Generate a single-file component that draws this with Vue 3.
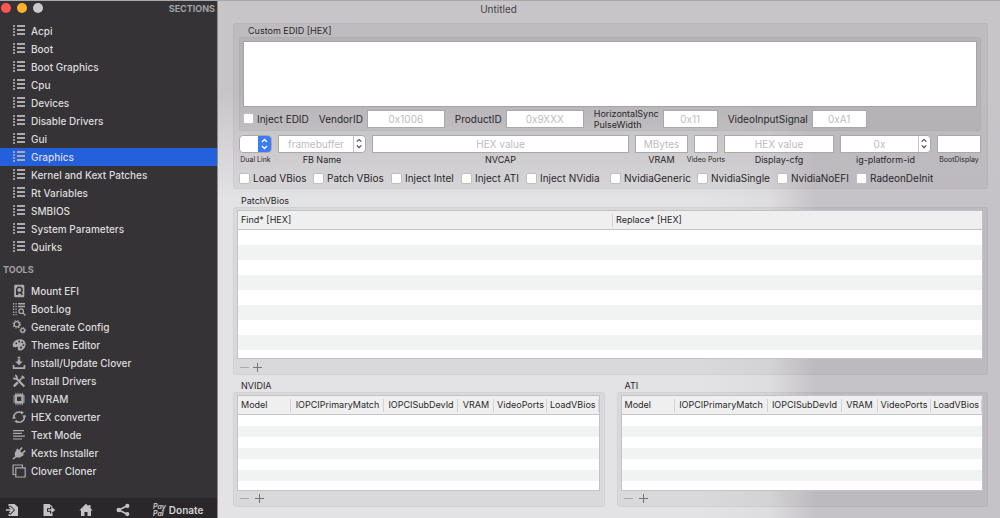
<script setup>
import { ref } from 'vue'

const sections = ['Acpi', 'Boot', 'Boot Graphics', 'Cpu', 'Devices', 'Disable Drivers', 'Gui', 'Graphics', 'Kernel and Kext Patches', 'Rt Variables', 'SMBIOS', 'System Parameters', 'Quirks']
const active = ref('Graphics')

const tools = [
  { name: 'Mount EFI', icon: 'disk' },
  { name: 'Boot.log', icon: 'log' },
  { name: 'Generate Config', icon: 'gears' },
  { name: 'Themes Editor', icon: 'palette' },
  { name: 'Install/Update Clover', icon: 'download' },
  { name: 'Install Drivers', icon: 'wrench' },
  { name: 'NVRAM', icon: 'chip' },
  { name: 'HEX converter', icon: 'sync' },
  { name: 'Text Mode', icon: 'lines' },
  { name: 'Kexts Installer', icon: 'plug' },
  { name: 'Clover Cloner', icon: 'copy' },
]

const flags = ['Load VBios', 'Patch VBios', 'Inject Intel', 'Inject ATI', 'Inject NVidia', 'NvidiaGeneric', 'NvidiaSingle', 'NvidiaNoEFI', 'RadeonDeInit']
const cards = ['NVIDIA', 'ATI']
const cardColumns = ['Model', 'IOPCIPrimaryMatch', 'IOPCISubDevId', 'VRAM', 'VideoPorts', 'LoadVBios']
</script>

<template>
  <div class="window">
    <aside class="sidebar">
      <header class="bar">
        <div class="lights">
          <button class="light red" aria-label="Close"></button>
          <button class="light amber" aria-label="Minimize"></button>
          <button class="light grey" aria-label="Zoom"></button>
        </div>
        <h2 class="heading">SECTIONS</h2>
      </header>
      <nav aria-label="Sections">
        <button v-for="s in sections" :key="s" class="item" :class="{ active: s === active }" @click="active = s">
          <svg class="icon" viewBox="0 0 14 14" fill="currentColor">
            <path opacity=".85" d="M1 1h2v2H1zM1 4h2v2H1zM1 7h2v2H1zM1 10h2v2H1z" />
            <path d="M5 1h8v2H5zM5 5h8v2H5zM5 9h8v2H5z" />
          </svg>
          <span>{{ s }}</span>
        </button>
      </nav>
      <h2 class="heading tools">TOOLS</h2>
      <nav aria-label="Tools">
        <button v-for="t in tools" :key="t.name" class="item">
          <svg class="icon" viewBox="0 0 14 14" fill="currentColor">
            <template v-if="t.icon === 'disk'">
              <path fill-rule="evenodd" d="M3.200.8h8.100a1 1 0 0 1 1 1v10.400a1 1 0 0 1-1 1H3.200a1 1 0 0 1-1-1V1.800a1 1 0 0 1 1-1zM7.300 2.500a3.500 3.500 0 0 0-3.300 4.600V11h2l.8-2 3.400 2.200.8-1.300-1.300-1.200A3.500 3.500 0 0 0 7.300 2.500z" />
              <circle cx="7.300" cy="5.900" r="2" />
            </template>
            <template v-else-if="t.icon === 'log'">
              <path d="M1 1h1.300v1.500H1zM1 3.800h1.300v1.500H1zM1 6.600h1.300v1.500H1zM1 9.400h1.300v1.500H1zM1 12h1.300v1.200H1zM3.500 1h1.200v1.500H3.500zM3.500 3.800h1.200v1.500H3.500zM3.500 6.600h1.200v1.500H3.500zM3.500 9.400h1.200v1.500H3.500zM3.500 12h1.200v1.200H3.500zM6 1h7v1.500H6zM6 3.800h7v1.500H6z" />
              <path d="M11 11l2.500 2.500" fill="none" stroke="currentColor" stroke-width="1.300" />
              <circle cx="9.200" cy="9.200" r="2.300" fill="none" stroke="currentColor" stroke-width="1.200" />
            </template>
            <g v-else-if="t.icon === 'gears'" fill="none" stroke="currentColor">
              <circle cx="4.800" cy="4.300" r="2.600" stroke-width="1.300" />
              <circle cx="4.800" cy="4.300" r="3.700" stroke-width="1.200" stroke-dasharray="1.300 1.600" />
              <circle cx="10.700" cy="10.300" r="1.900" stroke-width="1.300" />
              <circle cx="10.700" cy="10.300" r="2.800" stroke-width="1" stroke-dasharray="1 1.200" />
            </g>
            <path v-else-if="t.icon === 'palette'" fill-rule="evenodd" d="M8 1.300c3.300 0 5.600 2 5.600 4.900 0 3.500-2.700 6.400-6.200 6.400-1.600 0-1.700-1-1.500-2 .3-1.400-.2-2.300-1.700-1.700C2.500 9.500.7 9.400.7 7.300.7 4.200 4 1.300 8 1.300zM4.300 4.400a.9.900 0 1 0 0 1.800.9.900 0 0 0 0-1.800zM7.200 2.600a.9.900 0 1 0 0 1.800.9.900 0 0 0 0-1.800zM10.300 3.400a.9.900 0 1 0 0 1.800.9.900 0 0 0 0-1.800zM11.400 6.300a.9.900 0 1 0 0 1.800.9.900 0 0 0 0-1.800zM9 8.500a1.100 1.100 0 1 0 0 2.200 1.100 1.100 0 0 0 0-2.200z" />
            <path v-else-if="t.icon === 'download'" d="M5.700.8h2.600v1.700H5.700zM5.700 3.300h2.600V5.500h2.500L7 9.300 3.200 5.500h2.500zM.7 9h1.700v2.300h9.200V9h1.700v4H.7z" />
            <g v-else-if="t.icon === 'wrench'" fill="none" stroke="currentColor">
              <path d="M4.500 4.500l7.800 8" stroke-width="2.200" />
              <path d="M1.500 3.800c1 1.600 3 1.400 3.300.2.300-1-.5-2.300-1.700-2.600" stroke-width="1.800" />
              <path d="M1.800 12.300l4-4" stroke-width="2.500" />
              <path d="M6.500 7.500l5-5M9.800 1.800l2.600 2.600" stroke-width="1.700" />
            </g>
            <template v-else-if="t.icon === 'chip'">
              <path fill-rule="evenodd" d="M2.800 2.300h8.700v9.200H2.800zM5 4.700v4.400h4.300V4.700z" />
              <path d="M4 .9v2M6.100.9v2M8.200.9v2M10.300.9v2M4 11.100v2M6.100 11.100v2M8.200 11.100v2M10.300 11.100v2M1.200 4h2M1.200 6h2M1.200 8h2M1.200 10h2M11 4h2M11 6h2M11 8h2M11 10h2" fill="none" stroke="currentColor" stroke-width=".9" />
            </template>
            <g v-else-if="t.icon === 'sync'">
              <path d="M2 8.500A5.200 5.200 0 0 1 9.500 2.600M12.200 5.500A5.200 5.200 0 0 1 4.500 11.400" fill="none" stroke="currentColor" stroke-width="1.500" />
              <path d="M0 8.500h4L2 5.700zM10.200 5.600h4l-2 2.900zM9 .8l3 2-3 1.600zM5.200 9.800v3.400L2.300 11.300z" />
            </g>
            <path v-else-if="t.icon === 'lines'" d="M1 2h11v1.200H1zM1 4.800h9v1.200H1zM1 7.600h12v1.200H1zM1 10.400h9v1.200H1z" />
            <template v-else-if="t.icon === 'plug'">
              <path d="M5.300 3.200l5.700 5.800c-1.500 2.400-4.700 3.300-7.200 1.900C1.700 8.500 3 5.100 5.300 3.200z" />
              <path d="M1 13.200l3-2.700M7.300 5L10 1.500M10 7.600l3.200-3M4.800 3l6.500 6.400" fill="none" stroke="currentColor" stroke-width="1.600" />
            </template>
            <g v-else fill="none" stroke="currentColor" stroke-width="1.200">
              <path d="M3.500 10.500H1.100V1h9.300v2.500" />
              <path d="M3.800 3.800h9.400v9.200H3.800z" />
            </g>
          </svg>
          <span>{{ t.name }}</span>
        </button>
      </nav>
      <footer class="dock">
        <button aria-label="Import"><svg viewBox="0 0 14 14"><path fill="currentColor" d="M3.500 1h6L13 4v9H3.500v-2l2 .8L10 7 5.500 2.500l-2 1z" /><path d="M.8 7h6M4.500 3.800L7.700 7l-3.200 3.200" fill="none" stroke="currentColor" stroke-width="1.700" /></svg></button>
        <button aria-label="Export"><svg viewBox="0 0 14 14"><path fill="currentColor" d="M1.500 1h6l3 2.500v1L8 3.300v2H5v3.400h3v2l2.500-1V13h-9z" /><path fill="currentColor" d="M6 6.200h3.200V3.700L13.300 7 9.200 10.300V7.800H6z" /></svg></button>
        <button aria-label="Home"><svg viewBox="0 0 14 14"><path fill="currentColor" d="M7 .8l2.500 2.400V2h2v3.200l2.200 2.200H12V13H8.500V9h-3v4H2V7.400H.3z" /></svg></button>
        <button aria-label="Share"><svg viewBox="0 0 14 14"><path d="M11.300 2.800L2.800 7l8.500 4.200" fill="none" stroke="currentColor" stroke-width="1.600" /><g fill="currentColor"><circle cx="11.300" cy="2.900" r="2.100" /><circle cx="2.800" cy="7" r="2.300" /><circle cx="11.300" cy="11.100" r="2.100" /></g></svg></button>
        <button class="donate"><span class="paypal"><i>Pay</i><i>Pal</i></span>Donate</button>
      </footer>
    </aside>

    <main class="content">
      <h1 class="title">Untitled</h1>

      <section class="panel graphics">
        <label class="caption edid" for="edid">Custom EDID [HEX]</label>
        <div class="inner">
          <textarea id="edid"></textarea>
          <div class="edid-row">
            <label class="check"><input type="checkbox" />Inject EDID</label>
            <label class="pair">VendorID<input class="w78" type="text" placeholder="0x1006" /></label>
            <label class="pair">ProductID<input class="w78" type="text" placeholder="0x9XXX" /></label>
            <label class="pair"><span class="two">HorizontalSync<br />PulseWidth</span><input class="w55" type="text" placeholder="0x11" /></label>
            <label class="pair">VideoInputSignal<input class="w55" type="text" placeholder="0xA1" /></label>
          </div>
        </div>
        <div class="fields">
          <label class="field tiny">
            <span class="popup"><select></select><svg viewBox="0 0 12 16"><path d="M3.500 6L6 3.500 8.500 6M3.500 10L6 12.500 8.500 10" fill="none" stroke="currentColor" stroke-width="1.400" /></svg></span>
            <span>Dual Link</span>
          </label>
          <label class="field">
            <span class="combo"><input type="text" placeholder="framebuffer" /><svg viewBox="0 0 12 16"><path d="M3 5.500L5.500 3 8 5.500M3 9.500L5.500 12 8 9.500" fill="none" stroke="currentColor" stroke-width="1.200" /></svg></span>
            <span>FB Name</span>
          </label>
          <label class="field"><input type="text" placeholder="HEX value" /><span>NVCAP</span></label>
          <label class="field"><input type="text" placeholder="MBytes" /><span>VRAM</span></label>
          <label class="field tiny"><input type="text" /><span>Video Ports</span></label>
          <label class="field"><input type="text" placeholder="HEX value" /><span>Display-cfg</span></label>
          <label class="field">
            <span class="combo"><input type="text" placeholder="0x" /><svg viewBox="0 0 12 16"><path d="M3 5.500L5.500 3 8 5.500M3 9.500L5.500 12 8 9.500" fill="none" stroke="currentColor" stroke-width="1.200" /></svg></span>
            <span>ig-platform-id</span>
          </label>
          <label class="field tiny"><input type="text" /><span>BootDisplay</span></label>
        </div>
        <div class="flags">
          <label v-for="f in flags" :key="f" class="check"><input type="checkbox" />{{ f }}</label>
        </div>
      </section>

      <section class="group grow">
        <h3 class="caption">PatchVBios</h3>
        <div class="panel box">
          <div class="list tall">
            <table>
              <thead><tr><th>Find* [HEX]</th><th>Replace* [HEX]</th></tr></thead>
            </table>
          </div>
          <div class="actions">
            <button aria-label="Remove" disabled><svg viewBox="0 0 10 10"><path d="M0 4.500h9" stroke="currentColor" /></svg></button>
            <button aria-label="Add"><svg viewBox="0 0 10 10"><path d="M0 4.500h9M4.500 0v9" stroke="currentColor" /></svg></button>
          </div>
        </div>
      </section>

      <div class="cards">
        <section v-for="c in cards" :key="c" class="group">
          <h3 class="caption">{{ c }}</h3>
          <div class="panel box">
            <div class="list short">
              <table>
                <colgroup><col class="c1" /><col class="c2" /><col class="c3" /><col class="c4" /><col class="c5" /><col class="c6" /></colgroup>
                <thead><tr><th v-for="h in cardColumns" :key="h">{{ h }}</th></tr></thead>
              </table>
            </div>
            <div class="actions wide">
              <button aria-label="Remove" disabled><svg viewBox="0 0 10 10"><path d="M0 4.500h9" stroke="currentColor" /></svg></button>
              <button aria-label="Add"><svg viewBox="0 0 10 10"><path d="M0 4.500h9M4.500 0v9" stroke="currentColor" /></svg></button>
            </div>
          </div>
        </section>
      </div>
    </main>
  </div>
</template>

<style>
body { margin: 0; }
</style>

<style scoped>
* { box-sizing: border-box; }
.window {
  display: flex;
  min-height: 100vh;
  font-family: Inter, "Liberation Sans", sans-serif;
  font-size: 10px;
  line-height: 14px;
  color: #29272a;
  border-top: 1px solid #a9a8aa;
}
button, input, select, textarea { font: inherit; color: inherit; margin: 0; padding: 0; border: 0; border-radius: 0; background: none; }
h1, h2, h3 { margin: 0; font-weight: 400; }

.sidebar { display: flex; flex-direction: column; flex: 0 0 218px; background: #353336; color: #dddcdd; border-right: 1px solid #8d8b8e; }
.bar { display: flex; justify-content: space-between; height: 21px; padding: 1px 2px 0 1px; }
.lights { display: flex; gap: 6px; padding-top: 1px; }
.light { width: 10px; height: 10px; border-radius: 50%; }
.red { background: #fc5753; }
.amber { background: #fdb32b; }
.grey { background: #cbc9cb; }
.heading { font-size: 9px; font-weight: 700; color: #a3a1a4; }
.tools { padding: 7px 3px 5px; }
.item { display: flex; align-items: center; gap: 5px; width: 100%; height: 18px; padding: 0 12px; text-align: left; font-weight: 500; white-space: nowrap; }
.item.active { background: #2560dc; }
.icon { width: 14px; height: 14px; flex: none; color: #adabae; }
.dock { display: flex; align-items: center; height: 21px; margin-top: auto; padding: 3px 12px 0 5px; background: #29272a; border-top: 1px solid #323033; }
.dock button { width: 37px; height: 14px; color: #c5c3c5; }
.dock svg { display: block; width: 14px; height: 14px; }
.dock .donate { display: flex; flex: 1; align-items: center; gap: 3px; font-weight: 600; color: #d5d3d5; }
.paypal { display: flex; flex-direction: column; font-size: 7px; line-height: 7px; text-align: left; }

.content {
  display: flex; flex-direction: column; flex: 1; min-width: 0; padding: 0 12px 11px 15px;
  background:
    linear-gradient(to bottom, #c8c5c9 90px, #c8c5c900 200px),
    linear-gradient(to right, #c6c3c800 calc(100% - 300px), #c6c3c830 calc(100% - 230px), #c6c3c8 calc(100% - 185px)),
    #e3e2e4;
}
.title { height: 22px; padding: 1px 224px 0 0; text-align: center; font-size: 10px; color: #454346; }
.panel { border: 1px solid #00000009; border-radius: 3px; background: #0000000b; }
.caption { display: block; padding-left: 8px; font-size: 9px; line-height: 12px; }
.graphics { padding: 1px 6px 3px 5px; }
.graphics .caption { padding-left: 9px; }
.inner { padding: 3px; border: 1px solid #00000009; border-radius: 3px; background: #0000000b; }
textarea { display: block; width: 100%; height: 66px; background: #fff; border: 1px solid #a5a3a6; resize: none; }
.edid-row { display: flex; align-items: center; gap: 10px; height: 20px; padding-top: 3px; }
.pair { display: flex; align-items: center; gap: 4px; white-space: nowrap; }
.two { font-size: 9px; line-height: 11px; }
input[type="text"] { width: 100%; height: 18px; background: #fff; border: 1px solid #aaa8ab; text-align: center; }
input::placeholder { color: #bdbcbe; opacity: 1; }
input.w78 { width: 78px; }
input.w55 { width: 55px; }
.check { display: flex; align-items: center; gap: 3px; white-space: nowrap; }
input[type="checkbox"] { appearance: none; width: 11px; height: 11px; flex: none; background: #fff; border: 1px solid #c0bec1; border-radius: 2px; }
.fields { display: grid; grid-template-columns: 33px 88px minmax(0, 1fr) 53px 24px 110px 91px 44px; gap: 6px; margin-top: 4px; }
.field { display: flex; flex-direction: column; align-items: center; font-size: 9px; line-height: 14px; white-space: nowrap; }
.field input { font-size: 10px; }
.field.tiny { font-size: 7px; }
.popup, .combo { display: flex; width: 100%; height: 18px; border-radius: 4px; overflow: hidden; background: #fff; border: 1px solid #aaa8ab; }
.popup select { flex: 1; min-width: 0; appearance: none; }
.popup svg { width: 13px; height: 16px; background: #3b7cf6; color: #fff; }
.combo { border-radius: 0 4px 4px 0; }
.combo input { flex: 1; min-width: 0; height: 16px; border: 0; border-right: 1px solid #c5c3c6; }
.combo svg { width: 11px; height: 16px; color: #444; }
.flags { display: grid; grid-template-columns: 74px 78px 70px 65px 84px 87px 80px 79px auto; margin-top: 4px; height: 14px; }

.group { display: flex; flex-direction: column; min-width: 0; padding-top: 5px; }
.grow { flex: 1; padding-top: 6px; }
.box { display: flex; flex: 1; flex-direction: column; padding: 2px 4px 0 3px; }
.list { flex: 1; border: 1px solid #c2c1c3; overflow: hidden; }
.tall { min-height: 148px; background: repeating-linear-gradient(#fff 0 15px, #f1f3f3 15px 30px) 0 19px; }
.short { min-height: 96px; background: repeating-linear-gradient(#fff 0 11px, #f1f3f3 11px 22px) 0 19px; }
table { width: 100%; border-collapse: separate; border-spacing: 0; table-layout: fixed; }
th { height: 19px; padding: 0 0 0 3px; border-bottom: 1px solid #c5c4c6; background: linear-gradient(#d3d2d4, #d3d2d4) right center / 1px 13px no-repeat #efefef; font-size: 9px; font-weight: 400; text-align: left; white-space: nowrap; }
.tall th:first-child { width: 50.4%; }
.tall th:last-child { background: #efefef; }
.short th:not(:first-child) { text-align: center; padding: 0; }
.c1 { width: 53px; }
.c2 { width: 93px; }
.c3 { width: 74px; }
.c4 { width: 36px; }
.c5 { width: 53px; }
.actions { display: flex; gap: 3px; align-items: center; height: 15px; padding: 2px 0 0 3px; }
.actions.wide { gap: 5px; padding-top: 0; }
.actions button { width: 10px; height: 10px; color: #767477; }
.actions button:disabled { color: #aaa8ab; }
.actions svg { display: block; width: 10px; height: 10px; }
.cards { display: grid; grid-template-columns: 1fr 1fr; gap: 12px; }
</style>
